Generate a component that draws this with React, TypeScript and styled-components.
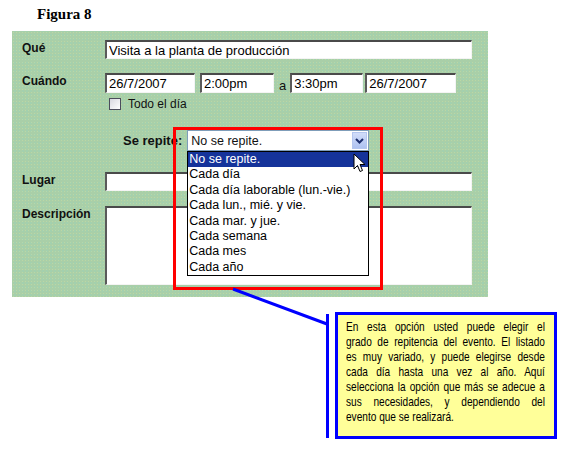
import * as React from 'react';
import styled, { createGlobalStyle } from 'styled-components';

const GlobalStyle = createGlobalStyle`
    html, body {
        margin: 0;
        padding: 0;
        background: #ffffff;
    }
    * {
        box-sizing: border-box;
    }
`;

const StyledPage = styled.div`
    position: relative;
    width: 567px;
    height: 449px;
    overflow: hidden;
    font-family: "Liberation Sans", Arial, sans-serif;
    color: #111;
`;
const StyledFigureTitle = styled.div`
    padding: 6px 0 0 37px;
    font-family: "Liberation Serif", "Times New Roman", serif;
    font-weight: 700;
    font-size: 15px;
    line-height: 17px;
    color: #000;
`;
const StyledPanel = styled.div`
    margin: 8px 0 0 12px;
    width: 476px;
    height: 266px;
    padding: 9px 16px 0 10px;
    background-color: #a9cfa8;
    background-image:
        radial-gradient(rgba(220, 230, 160, 0.35) 0.6px, transparent 0.9px),
        radial-gradient(rgba(140, 210, 200, 0.35) 0.6px, transparent 0.9px);
    background-size: 3px 3px, 4px 4px;
    background-position: 0 0, 1px 2px;
`;
const StyledRow = styled.div<{ $gap?: number }>`
    display: flex;
    align-items: flex-start;
    margin-top: ${p => p.$gap ?? 0}px;
`;
const StyledLabel = styled.div`
    flex-shrink: 0;
    width: 83px;
    font-size: 12px;
    font-weight: 700;
    line-height: 16px;
`;
const StyledFieldGroup = styled.div`
    display: flex;
    align-items: flex-end;
`;
const StyledInput = styled.input<{ $w: number; $ml?: number }>`
    width: ${p => p.$w}px;
    height: ${p => (p.$w > 200 ? 19 : 20)}px;
    margin: 0 0 0 ${p => p.$ml ?? 0}px;
    padding: 0 2px;
    border-style: solid;
    border-width: 2px 1px 1px 2px;
    border-color: #4a4a4a #f4f4f4 #f4f4f4 #5a5a5a;
    background: #fff;
    font-family: "Liberation Sans", Arial, sans-serif;
    font-size: 13px;
    color: #000;
    outline: none;
`;
const StyledTextArea = styled.textarea`
    width: 367px;
    height: 79px;
    margin: 0;
    padding: 2px;
    border-style: solid;
    border-width: 2px 1px 1px 2px;
    border-color: #4a4a4a #f4f4f4 #f4f4f4 #5a5a5a;
    background: #fff;
    resize: none;
    outline: none;
`;
const StyledJoiner = styled.span`
    margin: 0 4px 0 5px;
    font-size: 13px;
    line-height: 14px;
`;
const StyledCheckRow = styled.div`
    display: flex;
    align-items: center;
    margin: 5px 0 0 87px;
    gap: 7px;
    font-size: 12px;
    line-height: 12px;
`;
const StyledCheckBox = styled.span`
    width: 12px;
    height: 12px;
    border: 1px solid #4c4c5c;
    background: linear-gradient(135deg, #d8d8e0, #ffffff);
`;
const StyledRepeatRow = styled.div`
    display: flex;
    align-items: center;
    margin: 20px 0 0 101px;
`;
const StyledRepeatLabel = styled.span`
    font-size: 13px;
    font-weight: 700;
    margin-right: 5px;
`;
const StyledSelectWrap = styled.div`
    position: relative;
    width: 182px;
    height: 21px;
`;
const StyledSelectBox = styled.div`
    display: flex;
    align-items: center;
    justify-content: space-between;
    height: 100%;
    padding: 0 1px 0 3px;
    border: 1px solid #7f9db9;
    background: #fff;
    font-size: 12.5px;
`;
const StyledArrowButton = styled.span`
    display: flex;
    align-items: center;
    justify-content: center;
    width: 15px;
    height: 17px;
    border: 1px solid #b4c6ef;
    background: linear-gradient(#d2ddf9, #aec2f1);
`;
const StyledList = styled.ul`
    position: absolute;
    top: 21px;
    left: 0;
    width: 182px;
    margin: 0;
    padding: 0;
    list-style: none;
    border: 1px solid #000;
    background: #fff;
    z-index: 2;
`;
const StyledOption = styled.li<{ $active?: boolean }>`
    height: 15.4px;
    padding-left: 1px;
    font-size: 12.5px;
    line-height: 15.4px;
    white-space: nowrap;
    background: ${p => (p.$active ? '#15339a' : 'transparent')};
    color: ${p => (p.$active ? '#fff' : '#000')};
`;
const StyledHighlight = styled.div`
    position: absolute;
    left: -14px;
    top: -3px;
    width: 210px;
    height: 163px;
    border: 3px solid #ff0000;
    z-index: 3;
    pointer-events: none;
`;
const StyledPointer = styled.svg`
    position: absolute;
    left: 166px;
    top: 23px;
    z-index: 4;
`;
const StyledConnector = styled.svg`
    position: absolute;
    left: 0;
    top: 0;
    z-index: 5;
    pointer-events: none;
`;
const StyledCallout = styled.div`
    display: flex;
    align-items: center;
    gap: 6px;
    margin: 15px 0 0 326px;
`;
const StyledCalloutBar = styled.div`
    width: 3px;
    height: 124px;
    background: #0000ff;
`;
const StyledCalloutBox = styled.div`
    width: 222px;
    height: 127px;
    padding: 4px 0 0 8px;
    border: 3px solid #0000ff;
    background: #ffff99;
    overflow: hidden;
`;
// the screenshot uses a narrow face; Liberation Sans squeezed sideways stands in for it
const StyledCalloutText = styled.div`
    width: 256px;
    transform: scaleX(0.777);
    transform-origin: left top;
    font-family: "Liberation Sans", Arial, sans-serif;
    font-size: 13px;
    line-height: 15px;
    color: #000;
`;
const StyledCalloutLine = styled.div<{ $last?: boolean }>`
    text-align: ${p => (p.$last ? 'left' : 'justify')};
    text-align-last: ${p => (p.$last ? 'left' : 'justify')};
`;

const options = [
    'No se repite.',
    'Cada día',
    'Cada día laborable (lun.-vie.)',
    'Cada lun., mié. y vie.',
    'Cada mar. y jue.',
    'Cada semana',
    'Cada mes',
    'Cada año'
];

const calloutLines = [
    'En esta opción usted puede elegir el',
    'grado de repitencia del evento. El listado',
    'es muy variado, y puede elegirse desde',
    'cada día hasta una vez al año. Aquí',
    'selecciona la opción que más se adecue a',
    'sus necesidades, y dependiendo del',
    'evento que se realizará.'
];

const App = () => {
    return (
        <StyledPage>
            <GlobalStyle />
            <StyledFigureTitle>Figura 8</StyledFigureTitle>
            <StyledPanel>
                <StyledRow>
                    <StyledLabel>Qué</StyledLabel>
                    <StyledInput $w={367} readOnly value="Visita a la planta de producción" />
                </StyledRow>
                <StyledRow $gap={14}>
                    <StyledLabel>Cuándo</StyledLabel>
                    <StyledFieldGroup>
                        <StyledInput $w={90} readOnly value="26/7/2007" />
                        <StyledInput $w={74} $ml={5} readOnly value="2:00pm" />
                        <StyledJoiner>a</StyledJoiner>
                        <StyledInput $w={73} readOnly value="3:30pm" />
                        <StyledInput $w={91} $ml={2} readOnly value="26/7/2007" />
                    </StyledFieldGroup>
                </StyledRow>
                <StyledCheckRow>
                    <StyledCheckBox />
                    Todo el día
                </StyledCheckRow>
                <StyledRepeatRow>
                    <StyledRepeatLabel>Se repite:</StyledRepeatLabel>
                    <StyledSelectWrap>
                        <StyledSelectBox>
                            No se repite.
                            <StyledArrowButton>
                                <svg width="9" height="6" viewBox="0 0 9 6">
                                    <path d="M1 1 L4.5 4.5 L8 1" fill="none" stroke="#1d2f6e" strokeWidth="2" />
                                </svg>
                            </StyledArrowButton>
                        </StyledSelectBox>
                        <StyledList>
                            {options.map((o, i) => (
                                <StyledOption key={o} $active={i === 0}>{o}</StyledOption>
                            ))}
                        </StyledList>
                        <StyledHighlight />
                        <StyledPointer width="13" height="20" viewBox="0 0 13 20">
                            <path d="M1 1 L1 16 L4.5 12.5 L7 18.5 L9.5 17.5 L7 11.5 L12 11.5 Z" fill="#fff" stroke="#000" strokeWidth="1" strokeLinejoin="miter" />
                        </StyledPointer>
                    </StyledSelectWrap>
                </StyledRepeatRow>
                <StyledRow $gap={21}>
                    <StyledLabel>Lugar</StyledLabel>
                    <StyledInput $w={367} readOnly value="" />
                </StyledRow>
                <StyledRow $gap={15}>
                    <StyledLabel>Descripción</StyledLabel>
                    <StyledTextArea readOnly value="" />
                </StyledRow>
            </StyledPanel>
            <StyledCallout>
                <StyledCalloutBar />
                <StyledCalloutBox>
                    <StyledCalloutText>
                        {calloutLines.map((l, i) => (
                            <StyledCalloutLine key={i} $last={i === calloutLines.length - 1}>{l}</StyledCalloutLine>
                        ))}
                    </StyledCalloutText>
                </StyledCalloutBox>
            </StyledCallout>
            <StyledConnector width="567" height="449">
                <line x1="233" y1="289" x2="327" y2="324" stroke="#0000ff" strokeWidth="3" />
            </StyledConnector>
        </StyledPage>
    );
};

export default App;
